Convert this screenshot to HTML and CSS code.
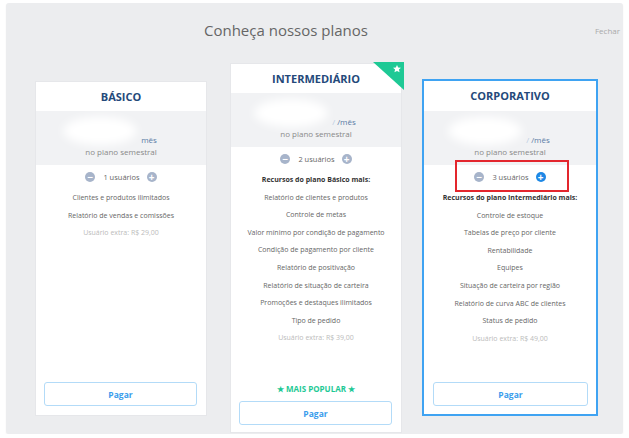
FILE: index.html
```html
<!DOCTYPE html>
<html>

<head>
    <title>Conheça nossos planos</title>
    <link rel="stylesheet" href="styles.css">
</head>

<body>
    <div class="panel">
        <div class="panel-header">
            <h1 class="panel-title">Conheça nossos planos</h1>
            <a class="close-link" href="#">Fechar</a>
        </div>

        <div class="plans">
            <!-- Básico -->
            <div class="plan plan-basic">
                <div class="plan-name">BÁSICO</div>
                <div class="plan-price">
                    <div class="price-line">
                        <span class="price-blur"></span><span class="per-month">mês</span>
                    </div>
                    <div class="price-note">no plano semestral</div>
                </div>
                <div class="users">
                    <span class="round-btn">&minus;</span>
                    <span class="users-count">1 usuários</span>
                    <span class="round-btn">+</span>
                </div>
                <ul class="features">
                    <li>Clientes e produtos ilimitados</li>
                    <li>Relatório de vendas e comissões</li>
                    <li class="extra">Usuário extra: R$ 29,00</li>
                </ul>
                <button class="pay-btn">Pagar</button>
            </div>

            <!-- Intermediário -->
            <div class="plan plan-popular">
                <svg class="ribbon" width="31" height="28" viewBox="0 0 31 28">
                    <polygon points="0,0 31,0 31,28" fill="#1ec995" />
                    <polygon points="24,3 25.2,5.6 28,5.8 25.9,7.6 26.6,10.3 24,8.9 21.4,10.3 22.1,7.6 20,5.8 22.8,5.6" fill="#ffffff" />
                </svg>
                <div class="plan-name">INTERMEDIÁRIO</div>
                <div class="plan-price">
                    <div class="price-line">
                        <span class="price-blur"></span><span class="per-month"><span class="slash">/</span> /mês</span>
                    </div>
                    <div class="price-note">no plano semestral</div>
                </div>
                <div class="users">
                    <span class="round-btn">&minus;</span>
                    <span class="users-count">2 usuários</span>
                    <span class="round-btn">+</span>
                </div>
                <ul class="features">
                    <li class="features-head">Recursos do plano Básico mais:</li>
                    <li>Relatório de clientes e produtos</li>
                    <li>Controle de metas</li>
                    <li>Valor mínimo por condição de pagamento</li>
                    <li>Condição de pagamento por cliente</li>
                    <li>Relatório de positivação</li>
                    <li>Relatório de situação de carteira</li>
                    <li>Promoções e destaques ilimitados</li>
                    <li>Tipo de pedido</li>
                    <li class="extra">Usuário extra: R$ 39,00</li>
                </ul>
                <div class="popular-tag">&#9733; MAIS POPULAR &#9733;</div>
                <button class="pay-btn">Pagar</button>
            </div>

            <!-- Corporativo -->
            <div class="plan plan-selected">
                <div class="plan-name">CORPORATIVO</div>
                <div class="plan-price">
                    <div class="price-line">
                        <span class="price-blur"></span><span class="per-month"><span class="slash">/</span> /mês</span>
                    </div>
                    <div class="price-note">no plano semestral</div>
                </div>
                <div class="users users-marked">
                    <span class="round-btn">&minus;</span>
                    <span class="users-count">3 usuários</span>
                    <span class="round-btn active">+</span>
                    <span class="mark-box"></span>
                </div>
                <ul class="features">
                    <li class="features-head">Recursos do plano Intermediário mais:</li>
                    <li>Controle de estoque</li>
                    <li>Tabelas de preço por cliente</li>
                    <li>Rentabilidade</li>
                    <li>Equipes</li>
                    <li>Situação de carteira por região</li>
                    <li>Relatório de curva ABC de clientes</li>
                    <li>Status de pedido</li>
                    <li class="extra">Usuário extra: R$ 49,00</li>
                </ul>
                <button class="pay-btn">Pagar</button>
            </div>
        </div>
    </div>
</body>

</html>
```

FILE: styles.css
```css
body {
    margin: 0;
    background-color: #ffffff;
    font-family: 'Open Sans', 'Liberation Sans', sans-serif;
    color: #666;
}

.panel {
    margin: 3px 6px 0 6px;
    height: 431px;
    background-color: #ecedef;
    border-radius: 3px;
    box-shadow: 0 1px 2px rgba(0, 0, 0, 0.06);
    overflow: hidden;
}

.panel-header {
    height: 60px;
    display: flex;
    align-items: center;
}

.panel-title {
    margin: 0 0 6px 0;
    padding-left: 198px;
    font-size: 15px;
    font-weight: 400;
    color: #666;
    line-height: 20px;
}

.close-link {
    margin-left: auto;
    margin-right: 3px;
    margin-bottom: 6px;
    font-size: 8px;
    color: #aaa;
    text-decoration: none;
}

.plans {
    display: flex;
    align-items: flex-start;
    padding-left: 29px;
}

.plan {
    box-sizing: border-box;
    width: 172px;
    background-color: #ffffff;
    border: 1px solid #e6e7ea;
    display: flex;
    flex-direction: column;
    position: relative;
}

.plan-basic {
    margin-top: 18px;
    height: 335px;
}

.plan-popular {
    margin-left: 23px;
    height: 370px;
}

.plan-selected {
    margin-top: 16px;
    margin-left: 20px;
    width: 176px;
    height: 337px;
    border: 2px solid #3fa3f2;
}

.ribbon {
    position: absolute;
    top: -2px;
    right: -3px;
}

.plan-name {
    height: 29px;
    line-height: 29px;
    text-align: center;
    font-size: 11px;
    font-weight: 700;
    color: #24497a;
}

.plan-selected .plan-name {
    height: 30px;
    line-height: 30px;
}

.plan-price {
    height: 54px;
    background-color: #f1f2f4;
    display: flex;
    flex-direction: column;
    align-items: center;
}

.price-line {
    display: flex;
    align-items: flex-end;
    margin-top: 6px;
    height: 28px;
    margin-left: -22px;
}

.price-blur {
    display: inline-block;
    width: 74px;
    height: 28px;
    border-radius: 50%;
    background-color: #ffffff;
    filter: blur(5px);
}

.per-month {
    font-size: 8px;
    color: #5a7ca6;
    margin-left: 4px;
    line-height: 10px;
}

.slash {
    color: #b9cbe2;
}

.price-note {
    font-size: 8px;
    color: #888;
    line-height: 10px;
    margin-top: 2px;
}

.users {
    display: flex;
    align-items: center;
    justify-content: center;
    height: 22px;
    margin-top: 1px;
    font-size: 7.5px;
    color: #666;
    position: relative;
}

.users-count {
    margin: 0 7px 0 8px;
}

.round-btn {
    width: 10px;
    height: 10px;
    border-radius: 50%;
    background-color: #a7b4ca;
    color: #ffffff;
    font-size: 10px;
    font-weight: 700;
    line-height: 10px;
    text-align: center;
}

.round-btn.active {
    background-color: #1e88e5;
}

.mark-box {
    position: absolute;
    left: 31px;
    top: -6px;
    width: 114px;
    height: 32px;
    box-sizing: border-box;
    border: 2px solid #e3262d;
}

.features {
    list-style: none;
    margin: 0;
    padding: 1px 0 0 0;
    text-align: center;
    font-size: 7px;
    line-height: 17.6px;
    color: #666;
}

.features-head {
    font-weight: 700;
    color: #333;
}

.features .extra {
    color: #bbb;
}

.popular-tag {
    margin-top: auto;
    text-align: center;
    font-size: 8px;
    font-weight: 700;
    color: #1ec995;
    margin-bottom: 7px;
}

.pay-btn {
    margin: auto 9px 9px 8px;
    height: 24px;
    background-color: #ffffff;
    border: 1px solid #b3dbf8;
    border-radius: 3px;
    color: #3a9cec;
    font-family: 'Open Sans', 'Liberation Sans', sans-serif;
    font-size: 8.5px;
    font-weight: 700;
    cursor: pointer;
}

.plan-popular .pay-btn {
    margin-top: 0;
    margin-bottom: 7px;
}

.plan-selected .pay-btn {
    margin: auto 8px 8px 9px;
}
```
